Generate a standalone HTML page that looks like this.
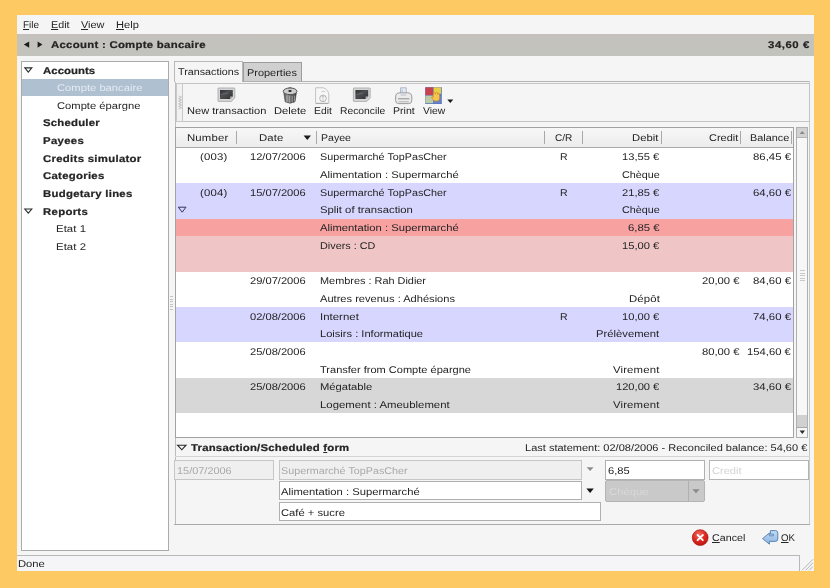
<!DOCTYPE html>
<html><head><meta charset="utf-8"><title>Grisbi</title>
<style>
html,body{margin:0;padding:0}
body{width:830px;height:588px;overflow:hidden;background:#fdc963;position:relative;font-family:"Liberation Sans",sans-serif;font-size:9.8px;color:#242424}
.a{position:absolute;box-sizing:border-box}
.t{position:absolute;white-space:nowrap;line-height:20px;height:20px;transform-origin:0 0;text-rendering:geometricPrecision}
#tx{position:absolute;left:0;top:0;width:830px;height:588px;opacity:0.999;will-change:opacity;filter:blur(0.35px)}
.t u{text-decoration:underline;text-underline-offset:1px}
svg{position:absolute;overflow:visible}
</style></head><body>
<!-- window -->
<div class="a" style="left:16.8px;top:14.8px;width:797.2px;height:555.9px;background:#f5f5f5"></div>
<!-- header bar -->
<div class="a" style="left:16.8px;top:33.5px;width:797.2px;height:22.3px;background:linear-gradient(#c5c2be,#c2c3bc)"></div>
<svg style="left:0;top:0" width="830" height="588">
  <polygon points="23.8,44.6 29.2,41.4 29.2,47.8" fill="#1c1c1c"/>
  <polygon points="42.4,44.6 37.6,41.4 37.6,47.8" fill="#1c1c1c"/>
</svg>
<!-- sidebar -->
<div class="a" style="left:21px;top:61px;width:148px;height:489.5px;background:#fff;border:1px solid #ababab"></div>
<div class="a" style="left:22px;top:79.3px;width:146px;height:17.2px;background:#afc0d1"></div>
<svg style="left:0;top:0" width="830" height="588" fill="none" stroke="#2a2a2a" stroke-width="1.1">
  <polygon points="24.8,67.9 31.8,67.9 28.3,72.1"/>
  <polygon points="24.8,209.0 31.8,209.0 28.3,213.2"/>
  <polygon points="177.6,445.2 186,445.2 181.8,449.8"/>
</svg>
<!-- pane handle -->
<div class="a" style="left:169.6px;top:296px;width:3.4px;height:15px;background:repeating-linear-gradient(#c4c4c4 0 1.2px,#f4f4f4 1.2px 2.5px)"></div>

<!-- notebook -->
<div class="a" style="left:174px;top:81px;width:636px;height:1px;background:#b4b4b4"></div>
<div class="a" style="left:174.6px;top:81px;width:1px;height:444px;background:#bdbdbd"></div>
<div class="a" style="left:243.2px;top:62.2px;width:59px;height:19.6px;background:#d0d0d0;border:1px solid #9c9c9c;border-bottom-color:#b0b0b0"></div>
<div class="a" style="left:174px;top:60.8px;width:69.4px;height:21.6px;background:#f5f5f5;border:1px solid #b8b8b8;border-bottom:none"></div>

<div class="a" style="left:809.2px;top:81px;width:1px;height:444px;background:#c6cbc6"></div>
<!-- toolbar -->
<div class="a" style="left:176px;top:82.6px;width:633.6px;height:39.6px;border:1px solid #c4c4c4;background:#f5f5f5"></div>
<div class="a" style="left:176.4px;top:83px;width:7px;height:38.6px;border:1px solid #c8c8c8;background:#f1f1f1"></div>
<svg style="left:0;top:0" width="830" height="588" fill="none" stroke="#bcbcbc" stroke-width="0.9"><polyline points="178.6,96 181.6,97.3 178.6,98.6 181.6,99.9 178.6,101.2 181.6,102.5 178.6,103.8 181.6,105.1 178.6,106.4 181.6,107.7 178.6,109"/></svg>
<!--ICONS_BEGIN-->
<svg style="left:0;top:0" width="830" height="588">
  <defs>
    <linearGradient id="scr" x1="0" y1="0" x2="1" y2="1"><stop offset="0" stop-color="#333336"/><stop offset="0.45" stop-color="#4d4e52"/><stop offset="1" stop-color="#2c2d30"/></linearGradient>
    <linearGradient id="can" x1="0" y1="0" x2="1" y2="0"><stop offset="0" stop-color="#565656"/><stop offset="0.3" stop-color="#8e8e8e"/><stop offset="0.55" stop-color="#6a6a6a"/><stop offset="0.8" stop-color="#4a4a4a"/><stop offset="1" stop-color="#3a3a3a"/></linearGradient>
    <g id="card">
      <path d="M0.4 0 H16.4 Q16.8 0 16.8 0.4 V10 L13.4 13.4 H0.4 Q0 13.4 0 13 V0.4 Q0 0 0.4 0Z" fill="#d6d6d6" stroke="#9c9c9c" stroke-width="0.7"/>
      <path d="M2 2.1 H14.8 V8.6 L12.2 11.1 H2Z" fill="url(#scr)"/>
      <path d="M14.8 8.6 L12.2 11.1 L12.2 8.6Z" fill="#bdbdbd"/>
      <path d="M3 6.6 L9.6 4.8" stroke="#77787c" stroke-width="0.7"/>
    </g>
  </defs>
  <!-- new transaction / reconcile -->
  <use href="#card" x="218" y="88"/>
  <use href="#card" x="353.4" y="88"/>
  <!-- trash -->
  <path d="M283.8 92.4 L285.2 101.8 Q290 104.6 295 101.8 L296.4 92.4Z" fill="url(#can)" stroke="#3a3a3a" stroke-width="0.6"/>
  <path d="M286.9 95.6 V102.2 M289.6 96 V102.8 M292.2 96 V102.6 M294.4 95.4 V101.6" stroke="#bcbcbc" stroke-width="0.7"/>
  <path d="M287.4 88.8 Q290 86.4 292.6 88.8" fill="#777" stroke="#555" stroke-width="0.7"/>
  <ellipse cx="290.1" cy="91.3" rx="6.9" ry="3.3" fill="#cdcdcd" stroke="#4c4c4c" stroke-width="0.9"/>
  <ellipse cx="290" cy="90.9" rx="1.7" ry="1" fill="#1e1e1e"/>
  <!-- edit doc -->
  <path d="M315.6 87.8 H323.4 Q328.6 89.6 328.8 95 V103.4 H315.6Z" fill="#f7f7f7" stroke="#bcbcbc" stroke-width="0.9" stroke-linejoin="round"/>
  <path d="M316 103.4 H328" stroke="#a4a4a4" stroke-width="0.9"/>
  <circle cx="323" cy="98.4" r="3.3" fill="none" stroke="#b4b4b4" stroke-width="1"/>
  <path d="M323 95.6 V101.2 M321.4 97 Q323 95.8 324.6 97" stroke="#c0c0c0" stroke-width="0.8" fill="none"/>
  <path d="M321.4 92 Q323.4 90 325.4 92" stroke="#c4c4c4" stroke-width="0.9" fill="none"/>
  <!-- printer -->
  <path d="M400.6 93.6 V87.8 H406.2 V93.6" fill="#e6edf6" stroke="#9aa6b8" stroke-width="0.8"/>
  <path d="M402.2 89.4 V92" stroke="#9ab0d0" stroke-width="0.8"/>
  <path d="M395.6 97 Q395.6 92.8 399.8 92.8 H407.4 Q411.8 92.8 411.8 97 V100.6 Q411.8 103.6 408.8 103.6 H398.6 Q395.6 103.6 395.6 100.6Z" fill="#ebebeb" stroke="#939393" stroke-width="0.9"/>
  <path d="M398 98.8 H409.4" stroke="#8e8e8e" stroke-width="1"/>
  <path d="M398.6 101.8 H408.8" stroke="#a6a6a6" stroke-width="0.8"/>
  <path d="M400.6 95 H406.2" stroke="#a8b4c6" stroke-width="0.8"/>
  <!-- view -->
  <rect x="425.2" y="87.2" width="16.6" height="16.8" fill="#5a76c2"/>
  <rect x="425.4" y="87.4" width="7.8" height="7.8" fill="#c8424e"/>
  <rect x="433.6" y="87.4" width="7.4" height="6.4" fill="#e6cf44"/>
  <rect x="425.4" y="95.6" width="7.8" height="7.6" fill="#bccaa6"/>
  <rect x="433.6" y="96" width="7.2" height="7.2" fill="#6a84c8"/>
  <path d="M433.2 94.4 Q433.2 92.6 434.3 92.6 Q435.3 92.6 435.3 94.2 Q435.4 92.2 436.6 92.2 Q437.7 92.2 437.7 94.4 Q438 93.2 438.8 93.4 Q439.6 93.6 439.5 96 V98.6 Q439.4 101 437 101 H435.4 Q433.6 101 432.6 99.2 L431.6 97.2 Q432.6 96.2 433.2 97.4Z" fill="#f6c64c" stroke="#c8822a" stroke-width="0.6"/>
  <polygon points="447.3,99.6 453.3,99.6 450.3,103" fill="#1a1a1a"/>
</svg>
<!--ICONS_END-->

<!-- table -->
<div class="a" style="left:174.9px;top:127.2px;width:619.3px;height:311.3px;background:#fff;border:1px solid #a2a2a2"></div>
<div class="a" style="left:175.9px;top:128.2px;width:617.3px;height:19.8px;background:linear-gradient(#f7f7f7,#ececec);border-bottom:1px solid #a9a9a9"></div>
<!-- col separators -->
<div class="a" style="left:236.2px;top:131px;width:1px;height:13px;background:#a8a8a8"></div>
<div class="a" style="left:316.4px;top:131px;width:1px;height:13px;background:#a8a8a8"></div>
<div class="a" style="left:544.4px;top:131px;width:1px;height:13px;background:#a8a8a8"></div>
<div class="a" style="left:581.6px;top:131px;width:1px;height:13px;background:#a8a8a8"></div>
<div class="a" style="left:660.8px;top:131px;width:1px;height:13px;background:#a8a8a8"></div>
<div class="a" style="left:740.2px;top:131px;width:1px;height:13px;background:#a8a8a8"></div>
<div class="a" style="left:791.2px;top:131px;width:1px;height:13px;background:#a8a8a8"></div>
<svg style="left:0;top:0" width="830" height="588"><polygon points="303.6,135.6 311,135.6 307.3,140" fill="#1c1c1c"/></svg>
<!-- rows -->
<div class="a" style="left:175.9px;top:183px;width:617.3px;height:35.6px;background:#d6d6fe"></div>
<div class="a" style="left:175.9px;top:218.6px;width:617.3px;height:17.6px;background:#f7a1a1"></div>
<div class="a" style="left:175.9px;top:236.2px;width:617.3px;height:35.5px;background:#efc5c5"></div>
<div class="a" style="left:175.9px;top:307px;width:617.3px;height:35.4px;background:#d6d6fe"></div>
<div class="a" style="left:175.9px;top:377.7px;width:617.3px;height:35.2px;background:#d7d7d7"></div>
<svg style="left:0;top:0" width="830" height="588" fill="none" stroke="#34345a" stroke-width="1"><polygon points="178.4,207.2 186.0,207.2 182.2,212.2"/></svg>
<!-- scrollbar -->
<div class="a" style="left:796.2px;top:127px;width:12px;height:311px;background:#f7f7f7;border:1px solid #b0b0b0"></div>
<div class="a" style="left:797.2px;top:128px;width:10px;height:9.6px;background:#d2d2d2;border-bottom:1px solid #b4b4b4"></div>
<div class="a" style="left:797.2px;top:415px;width:10px;height:12px;background:#d0d0d0"></div>
<div class="a" style="left:797.2px;top:427px;width:10px;height:10.4px;background:#f6f6f6;border-top:1px solid #a8a8a8"></div>
<div class="a" style="left:799.6px;top:270px;width:5.4px;height:13px;background:repeating-linear-gradient(#c9c9c9 0 1.1px,#f7f7f7 1.1px 2.6px)"></div>
<svg style="left:0;top:0" width="830" height="588">
  <polygon points="799.6,134 804.8,134 802.2,131" fill="#8a8a8a"/>
  <polygon points="799.6,430.6 805,430.6 802.3,434" fill="#2a2a2a"/>
</svg>

<!-- expander underline -->
<div class="a" style="left:175px;top:456.3px;width:635px;height:1px;background:#d4d4d4"></div>
<!-- form fields -->
<div class="a" style="left:174px;top:460.4px;width:100.4px;height:19.2px;background:#efefef;border:1px solid #c6c6c6"></div>
<div class="a" style="left:278.6px;top:460.4px;width:303px;height:19.2px;background:#efefef;border:1px solid #c6c6c6"></div>
<div class="a" style="left:278.6px;top:481.4px;width:303px;height:19px;background:#fff;border:1px solid #b0b0b0"></div>
<div class="a" style="left:278.6px;top:502.2px;width:322.4px;height:18.6px;background:#fff;border:1px solid #b0b0b0"></div>
<div class="a" style="left:605.2px;top:460.4px;width:99.8px;height:19.2px;background:#fff;border:1px solid #b0b0b0"></div>
<div class="a" style="left:709.4px;top:460.4px;width:100px;height:19.2px;background:#fff;border:1px solid #b4b4b4"></div>
<div class="a" style="left:605.2px;top:480.4px;width:99.8px;height:21.2px;background:#c9c9c9;border:1px solid #b4b4b4;border-radius:2px"></div>
<div class="a" style="left:688.2px;top:481.4px;width:1px;height:19.2px;background:#b0b0b0"></div>
<svg style="left:0;top:0" width="830" height="588">
  <polygon points="586.6,467.2 593.6,467.2 590.1,471" fill="#8c8c8c"/>
  <polygon points="586.4,488.6 593.8,488.6 590.1,493" fill="#151515"/>
  <polygon points="692.4,489.2 699.6,489.2 696,493.2" fill="#8a8a8a"/>
</svg>
<!-- separator -->
<div class="a" style="left:174px;top:524.4px;width:636px;height:1px;background:#a9a9a9"></div>
<!-- buttons icons -->
<svg style="left:0;top:0" width="830" height="588">
  <defs><radialGradient id="rg" cx="0.42" cy="0.3" r="0.75"><stop offset="0" stop-color="#f4685c"/><stop offset="0.55" stop-color="#dc2820"/><stop offset="1" stop-color="#b81412"/></radialGradient>
  <linearGradient id="okg" x1="0" y1="0" x2="0" y2="1"><stop offset="0" stop-color="#c4dcf2"/><stop offset="1" stop-color="#8db4de"/></linearGradient></defs>
  <circle cx="700.2" cy="537.6" r="7.9" fill="url(#rg)" stroke="#a81a16" stroke-width="0.7"/>
  <path d="M697.6 535 L702.8 540.2 M702.8 535 L697.6 540.2" stroke="#fff" stroke-width="1.9" stroke-linecap="round"/>
  <path d="M770.4 530.6 H775.4 Q777.8 530.6 777.8 533 V539 Q777.8 541.4 775.4 541.4 H769.4 V544.2 L762.6 538.6 L769.4 533 V535.8 H773.4 V534.2 H770.4Z" fill="url(#okg)" stroke="#4f7db6" stroke-width="0.9" stroke-linejoin="round"/>
</svg>
<!-- status bar -->
<div class="a" style="left:17.4px;top:554.8px;width:782.6px;height:15.9px;border:1px solid #b8b8b8;border-bottom:none;border-left:none;background:#f5f5f7"></div>
<svg style="left:0;top:0" width="830" height="588" stroke="#b5b5b5" stroke-width="1">
  <path d="M802 570.3 L813 559.3 M805.6 570.3 L813 562.8 M809.2 570.3 L813 566.4"/>
</svg>

<div id="tx">
<div class="t" style="left:23.3px;top:15.50px;transform:scaleX(1.0129);"><u>F</u>ile</div>
<div class="t" style="left:50.9px;top:15.50px;transform:scaleX(1.0953);"><u>E</u>dit</div>
<div class="t" style="left:81.0px;top:15.50px;transform:scaleX(1.1157);"><u>V</u>iew</div>
<div class="t" style="left:116.0px;top:15.50px;transform:scaleX(1.1312);"><u>H</u>elp</div>
<div class="t" style="left:50.9px;top:35.60px;transform:scaleX(1.1600);letter-spacing:0.245px;font-weight:bold;-webkit-text-stroke:0.22px;">Account : Compte bancaire</div>
<div class="t" style="left:767.5px;top:35.60px;transform:scaleX(1.1600);letter-spacing:0.486px;font-weight:bold;-webkit-text-stroke:0.22px;">34,60 €</div>
<div class="t" style="left:43.2px;top:61.60px;transform:scaleX(1.1600);letter-spacing:0.051px;font-weight:bold;-webkit-text-stroke:0.22px;">Accounts</div>
<div class="t" style="left:57.1px;top:79.23px;transform:scaleX(1.1446);color:#e4eaf1;">Compte bancaire</div>
<div class="t" style="left:57.1px;top:96.86px;transform:scaleX(1.1427);">Compte épargne</div>
<div class="t" style="left:43.2px;top:114.49px;transform:scaleX(1.1600);letter-spacing:0.188px;font-weight:bold;-webkit-text-stroke:0.22px;">Scheduler</div>
<div class="t" style="left:43.2px;top:132.12px;transform:scaleX(1.1600);letter-spacing:0.278px;font-weight:bold;-webkit-text-stroke:0.22px;">Payees</div>
<div class="t" style="left:43.2px;top:149.75px;transform:scaleX(1.1600);letter-spacing:0.260px;font-weight:bold;-webkit-text-stroke:0.22px;">Credits simulator</div>
<div class="t" style="left:43.2px;top:167.38px;transform:scaleX(1.1600);letter-spacing:0.245px;font-weight:bold;-webkit-text-stroke:0.22px;">Categories</div>
<div class="t" style="left:43.2px;top:185.01px;transform:scaleX(1.1600);letter-spacing:0.249px;font-weight:bold;-webkit-text-stroke:0.22px;">Budgetary lines</div>
<div class="t" style="left:43.2px;top:202.64px;transform:scaleX(1.1600);letter-spacing:0.265px;font-weight:bold;-webkit-text-stroke:0.22px;">Reports</div>
<div class="t" style="left:55.5px;top:220.27px;transform:scaleX(1.1600);letter-spacing:0.051px;">Etat 1</div>
<div class="t" style="left:55.5px;top:237.90px;transform:scaleX(1.1600);letter-spacing:0.051px;">Etat 2</div>
<div class="t" style="left:178.3px;top:63.10px;transform:scaleX(1.0981);">Transactions</div>
<div class="t" style="left:246.8px;top:63.80px;transform:scaleX(1.1174);">Properties</div>
<div class="t" style="left:187.0px;top:102.10px;transform:scaleX(1.1288);">New transaction</div>
<div class="t" style="left:273.5px;top:102.10px;transform:scaleX(1.1402);">Delete</div>
<div class="t" style="left:313.5px;top:102.10px;transform:scaleX(1.0538);">Edit</div>
<div class="t" style="left:339.5px;top:102.10px;transform:scaleX(1.0527);">Reconcile</div>
<div class="t" style="left:392.5px;top:102.10px;transform:scaleX(1.0816);">Print</div>
<div class="t" style="left:422.8px;top:102.10px;transform:scaleX(1.0588);">View</div>
<div class="t" style="left:186.5px;top:129.40px;transform:scaleX(1.1600);letter-spacing:0.132px;">Number</div>
<div class="t" style="left:259.0px;top:129.40px;transform:scaleX(1.1600);letter-spacing:0.082px;">Date</div>
<div class="t" style="left:320.7px;top:129.40px;transform:scaleX(1.0799);">Payee</div>
<div class="t" style="left:554.8px;top:129.40px;transform:scaleX(1.0252);">C/R</div>
<div class="t" style="left:631.8px;top:129.40px;transform:scaleX(1.1497);">Debit</div>
<div class="t" style="left:709.1px;top:129.40px;transform:scaleX(1.1170);">Credit</div>
<div class="t" style="left:750.0px;top:129.40px;transform:scaleX(1.1100);">Balance</div>
<div class="t" style="left:200.4px;top:148.20px;transform:scaleX(1.1600);letter-spacing:0.165px;">(003)</div>
<div class="t" style="left:250.2px;top:148.20px;transform:scaleX(1.1356);">12/07/2006</div>
<div class="t" style="left:320.1px;top:148.20px;transform:scaleX(1.0982);">Supermarché TopPasCher</div>
<div class="t" style="left:560.2px;top:148.20px;transform:scaleX(1.0737);">R</div>
<div class="t" style="left:622.3px;top:148.20px;transform:scaleX(1.1380);">13,55 €</div>
<div class="t" style="left:752.9px;top:148.20px;transform:scaleX(1.1600);letter-spacing:0.012px;">86,45 €</div>
<div class="t" style="left:320.1px;top:165.90px;transform:scaleX(1.1473);">Alimentation : Supermarché</div>
<div class="t" style="left:621.7px;top:165.90px;transform:scaleX(1.1011);">Chèque</div>
<div class="t" style="left:200.4px;top:183.60px;transform:scaleX(1.1600);letter-spacing:0.165px;">(004)</div>
<div class="t" style="left:250.2px;top:183.60px;transform:scaleX(1.1356);">15/07/2006</div>
<div class="t" style="left:320.1px;top:183.60px;transform:scaleX(1.0982);">Supermarché TopPasCher</div>
<div class="t" style="left:560.2px;top:183.60px;transform:scaleX(1.0737);">R</div>
<div class="t" style="left:622.3px;top:183.60px;transform:scaleX(1.1380);">21,85 €</div>
<div class="t" style="left:752.9px;top:183.60px;transform:scaleX(1.1600);letter-spacing:0.012px;">64,60 €</div>
<div class="t" style="left:320.1px;top:201.30px;transform:scaleX(1.1525);">Split of transaction</div>
<div class="t" style="left:621.7px;top:201.30px;transform:scaleX(1.1011);">Chèque</div>
<div class="t" style="left:320.1px;top:219.00px;transform:scaleX(1.1473);">Alimentation : Supermarché</div>
<div class="t" style="left:627.9px;top:219.00px;transform:scaleX(1.1596);">6,85 €</div>
<div class="t" style="left:320.1px;top:236.70px;transform:scaleX(1.1043);">Divers : CD</div>
<div class="t" style="left:622.3px;top:236.70px;transform:scaleX(1.1380);">15,00 €</div>
<div class="t" style="left:250.2px;top:272.10px;transform:scaleX(1.1356);">29/07/2006</div>
<div class="t" style="left:320.1px;top:272.10px;transform:scaleX(1.1125);">Membres : Rah Didier</div>
<div class="t" style="left:702.0px;top:272.10px;transform:scaleX(1.1472);">20,00 €</div>
<div class="t" style="left:752.9px;top:272.10px;transform:scaleX(1.1600);letter-spacing:0.012px;">84,60 €</div>
<div class="t" style="left:320.1px;top:289.80px;transform:scaleX(1.1319);">Autres revenus : Adhésions</div>
<div class="t" style="left:628.5px;top:289.80px;transform:scaleX(1.1600);letter-spacing:0.142px;">Dépôt</div>
<div class="t" style="left:250.2px;top:307.50px;transform:scaleX(1.1356);">02/08/2006</div>
<div class="t" style="left:320.1px;top:307.50px;transform:scaleX(1.1600);letter-spacing:0.031px;">Internet</div>
<div class="t" style="left:560.2px;top:307.50px;transform:scaleX(1.0737);">R</div>
<div class="t" style="left:622.3px;top:307.50px;transform:scaleX(1.1380);">10,00 €</div>
<div class="t" style="left:752.9px;top:307.50px;transform:scaleX(1.1600);letter-spacing:0.012px;">74,60 €</div>
<div class="t" style="left:320.1px;top:325.20px;transform:scaleX(1.1326);">Loisirs : Informatique</div>
<div class="t" style="left:596.3px;top:325.20px;transform:scaleX(1.1491);">Prélèvement</div>
<div class="t" style="left:250.2px;top:342.90px;transform:scaleX(1.1356);">25/08/2006</div>
<div class="t" style="left:702.0px;top:342.90px;transform:scaleX(1.1472);">80,00 €</div>
<div class="t" style="left:747.1px;top:342.90px;transform:scaleX(1.1484);">154,60 €</div>
<div class="t" style="left:320.1px;top:360.60px;transform:scaleX(1.1257);">Transfer from Compte épargne</div>
<div class="t" style="left:613.2px;top:360.60px;transform:scaleX(1.1600);letter-spacing:0.126px;">Virement</div>
<div class="t" style="left:250.2px;top:378.30px;transform:scaleX(1.1356);">25/08/2006</div>
<div class="t" style="left:320.1px;top:378.30px;transform:scaleX(1.1428);">Mégatable</div>
<div class="t" style="left:616.2px;top:378.30px;transform:scaleX(1.1353);">120,00 €</div>
<div class="t" style="left:752.9px;top:378.30px;transform:scaleX(1.1600);letter-spacing:0.012px;">34,60 €</div>
<div class="t" style="left:320.1px;top:396.00px;transform:scaleX(1.1600);letter-spacing:0.007px;">Logement : Ameublement</div>
<div class="t" style="left:613.2px;top:396.00px;transform:scaleX(1.1600);letter-spacing:0.126px;">Virement</div>
<div class="t" style="left:191.1px;top:438.90px;transform:scaleX(1.1600);letter-spacing:0.182px;font-weight:bold;-webkit-text-stroke:0.22px;">Transaction/Scheduled <u>f</u>orm</div>
<div class="t" style="left:525.1px;top:439.40px;transform:scaleX(1.1243);">Last statement: 02/08/2006 - Reconciled balance: 54,60 €</div>
<div class="t" style="left:177.3px;top:461.80px;transform:scaleX(1.1153);color:#a9a9a9;">15/07/2006</div>
<div class="t" style="left:281.2px;top:461.80px;transform:scaleX(1.0982);color:#a9a9a9;">Supermarché TopPasCher</div>
<div class="t" style="left:281.2px;top:483.00px;transform:scaleX(1.1473);">Alimentation : Supermarché</div>
<div class="t" style="left:281.2px;top:503.60px;transform:scaleX(1.1446);">Café + sucre</div>
<div class="t" style="left:608.1px;top:461.80px;transform:scaleX(1.1374);">6,85</div>
<div class="t" style="left:712.0px;top:461.80px;transform:scaleX(1.1285);color:#d3d3d3;">Credit</div>
<div class="t" style="left:608.7px;top:483.00px;transform:scaleX(1.1507);color:#d9d9d9;">Chèque</div>
<div class="t" style="left:711.7px;top:528.90px;transform:scaleX(1.0951);"><u>C</u>ancel</div>
<div class="t" style="left:780.7px;top:528.90px;transform:scaleX(0.9890);"><u>O</u>K</div>
<div class="t" style="left:17.9px;top:554.90px;transform:scaleX(1.1442);">Done</div>
</div>
</body></html>
